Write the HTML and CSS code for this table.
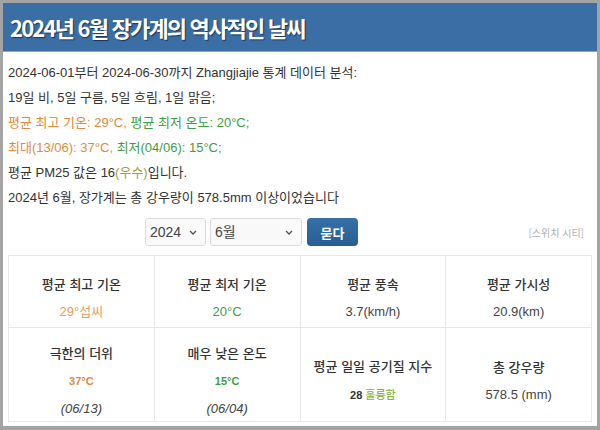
FILE: index.html
```html
<!DOCTYPE html>
<html lang="ko">
<head>
<meta charset="utf-8">
<title>2024년 6월 장가계의 역사적인 날씨</title>
<link rel="stylesheet" href="styles.css">
</head>
<body>
<div class="frame">
	<h1 class="title">2024년 6월 장가계의 역사적인 날씨</h1>

	<div class="summary">
		<p>2024-06-01부터 2024-06-30까지 Zhangjiajie 통계 데이터 분석:</p>
		<p class="shade">19일 비, 5일 구름, 5일 흐림, 1일 맑음;</p>
		<p><span class="hot">평균 최고 기온: 29°C,</span> <span class="cold">평균 최저 온도: 20°C;</span></p>
		<p><span class="hot">최대(13/06): 37°C,</span> <span class="cold">최저(04/06): 15°C;</span></p>
		<p>평균 PM25 값은 16<span class="good">(우수)</span>입니다.</p>
		<p>2024년 6월, 장가계는 총 강우량이 578.5mm 이상이었습니다</p>
	</div>

	<div class="controls">
		<select class="sel sel-year">
			<option>2024</option>
		</select>
		<select class="sel sel-month">
			<option>6월</option>
		</select>
		<button type="button" class="ask">묻다</button>
		<a class="switch">[스위치 시티]</a>
	</div>

	<table class="stats">
		<tr class="row1">
			<td>
				<div class="ttl">평균 최고 기온</div>
				<div class="val hot-lt">29°섭씨</div>
			</td>
			<td>
				<div class="ttl">평균 최저 기온</div>
				<div class="val cold">20°C</div>
			</td>
			<td>
				<div class="ttl">평균 풍속</div>
				<div class="val">3.7(km/h)</div>
			</td>
			<td>
				<div class="ttl">평균 가시성</div>
				<div class="val">20.9(km)</div>
			</td>
		</tr>
		<tr class="row2">
			<td>
				<div class="ttl">극한의 더위</div>
				<div class="val-sm hot">37°C</div>
				<div class="date">(06/13)</div>
			</td>
			<td>
				<div class="ttl">매우 낮은 온도</div>
				<div class="val-sm cold">15°C</div>
				<div class="date">(06/04)</div>
			</td>
			<td>
				<div class="ttl">평균 일일 공기질 지수</div>
				<div class="val-sm aqi">28 <span class="good-lt">훌륭함</span></div>
			</td>
			<td>
				<div class="ttl">총 강우량</div>
				<div class="val">578.5 (mm)</div>
			</td>
		</tr>
	</table>
</div>
</body>
</html>
```

FILE: styles.css
```css
* {
	margin:0;
	padding:0;
	box-sizing:border-box;
}
body {
	background:#a4a4a4;
	font-family:"Liberation Sans", "Noto Sans CJK KR", sans-serif;
	font-size:13px;
	color:#333;
}
.frame {
	margin:3px 3px 0 3px;
	height:423px;
	background:#fff;
	overflow:hidden;
}
.title {
	height:49px;
	padding:10px 0 0 7px;
	background:#3c6ea6;
	border-bottom:1px solid #8aa8c8;
	color:#fff;
	font-family:"Noto Sans CJK KR", sans-serif;
	font-size:22px;
	font-weight:700;
	line-height:28px;
	letter-spacing:-1.8px;
	text-shadow:1px 1px 1px #1a3554;
}
.summary {
	padding:8px 5px 0 5px;
}
.summary p {
	line-height:25px;
}
.controls {
	display:flex;
	align-items:center;
	margin-top:8px;
	padding:0 13px 0 142px;
	height:28px;
}
.sel {
	appearance:none;
	-webkit-appearance:none;
	height:28px;
	border:1px solid #dcdcdc;
	border-radius:3px;
	background:#f9f9f9 url("data:image/svg+xml;utf8,<svg xmlns='http://www.w3.org/2000/svg' width='8' height='5'><path d='M1 1l3 3 3-3' fill='none' stroke='%23555' stroke-width='1.3'/></svg>") no-repeat right 8px center;
	font-family:"Liberation Sans", "Noto Sans CJK KR", sans-serif;
	font-size:14px;
	color:#444;
	padding-left:4px;
}
.sel-year {
	width:61px;
}
.sel-month {
	width:92px;
	margin-left:4px;
}
.ask {
	width:51px;
	height:28px;
	margin-left:5px;
	border:0;
	border-radius:4px;
	background:linear-gradient(#3570a8, #285e93);
	color:#fff;
	font-family:"Noto Sans CJK KR", sans-serif;
	font-size:13px;
	font-weight:700;
}
.switch {
	margin-left:auto;
	font-size:10px;
	color:#b0b0b0;
	font-family:"Noto Sans CJK KR", sans-serif;
}
.stats {
	width:584px;
	margin:9px 5px 0 5px;
	border-collapse:collapse;
	table-layout:fixed;
}
.stats td {
	border:1px solid #e8e8e8;
	text-align:center;
	vertical-align:middle;
	padding:12px 2px 0 2px;
}
.row1 {
	height:72px;
}
.row2 {
	height:94px;
}
.ttl {
	font-family:"Noto Sans CJK KR", sans-serif;
	font-weight:500;
	font-size:13px;
	line-height:20px;
	color:#333;
}
.val {
	margin-top:8px;
	line-height:20px;
	font-size:13px;
	color:#444;
}
.val-sm {
	margin-top:8px;
	line-height:20px;
	font-size:11px;
	font-weight:700;
}
.aqi {
	color:#333;
}
.aqi .good-lt {
	font-family:"Noto Sans CJK KR", sans-serif;
	font-weight:500;
}
.date {
	margin-top:8px;
	line-height:20px;
	font-style:italic;
	color:#444;
}
/* colours last so they win over the value classes */
.hot {
	color:#e08a3c;
}
.hot-lt {
	color:#e6a05c;
}
.cold {
	color:#3f9e3f;
}
.good {
	color:#a2a234;
}
.good-lt {
	color:#8db23c;
}
```
